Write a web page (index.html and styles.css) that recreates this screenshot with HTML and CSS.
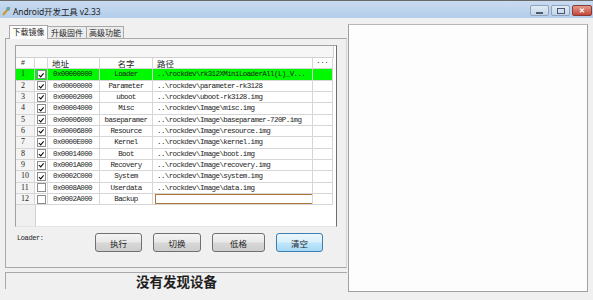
FILE: index.html
```html
<!DOCTYPE html>
<html lang="zh-CN">
<head>
    <meta charset="UTF-8">
    <title>Android开发工具 v2.33</title>
    <link rel="stylesheet" href="styles.css">
</head>
<body>
    <div class="titlebar">
        <svg class="app-icon" width="9" height="10" viewBox="0 0 9 10">
            <path d="M1 9 L6 3" stroke="#c89a2a" stroke-width="2"/>
            <path d="M5 1 L8 1 L8 4 L6 5 L4 3 Z" fill="#6aa3a8"/>
        </svg>
        <span class="title">Android开发工具 v2.33</span>
        <div class="controls">
            <span class="ctl min"><i></i></span>
            <span class="ctl max"><i></i></span>
            <span class="ctl close">✕</span>
        </div>
    </div>

    <div class="main">
        <div class="left">
            <div class="tabs">
                <span class="tab active">下载镜像</span>
                <span class="tab">升级固件</span>
                <span class="tab">高级功能</span>
            </div>
            <div class="panel">
                <div class="list">
                    <div class="list-top"></div>
                    <div class="grid">
                        <div class="hd num">#</div>
                        <div class="hd"></div>
                        <div class="hd left-text">地址</div>
                        <div class="hd center">名字</div>
                        <div class="hd left-text">路径</div>
                        <div class="hd center dots">...</div>

                        <div class="c num sel">1</div><div class="c chk sel"><span class="box on"></span></div><div class="c addr sel">0x00000000</div><div class="c name sel">Loader</div><div class="c path sel">..\rockdev\rk312XMiniLoaderAll(L)_V...</div><div class="c sel"></div>
                        <div class="c num">2</div><div class="c chk"><span class="box on"></span></div><div class="c addr">0x00000000</div><div class="c name">Parameter</div><div class="c path">..\rockdev\parameter-rk3128</div><div class="c"></div>
                        <div class="c num">3</div><div class="c chk"><span class="box on"></span></div><div class="c addr">0x00002000</div><div class="c name">uboot</div><div class="c path">..\rockdev\uboot-rk3128.img</div><div class="c"></div>
                        <div class="c num">4</div><div class="c chk"><span class="box on"></span></div><div class="c addr">0x00004000</div><div class="c name">Misc</div><div class="c path">..\rockdev\Image\misc.img</div><div class="c"></div>
                        <div class="c num">5</div><div class="c chk"><span class="box on"></span></div><div class="c addr">0x00006000</div><div class="c name">baseparamer</div><div class="c path">..\rockdev\Image\baseparamer-720P.img</div><div class="c"></div>
                        <div class="c num">6</div><div class="c chk"><span class="box on"></span></div><div class="c addr">0x00006800</div><div class="c name">Resource</div><div class="c path">..\rockdev\Image\resource.img</div><div class="c"></div>
                        <div class="c num">7</div><div class="c chk"><span class="box on"></span></div><div class="c addr">0x0000E000</div><div class="c name">Kernel</div><div class="c path">..\rockdev\Image\kernel.img</div><div class="c"></div>
                        <div class="c num">8</div><div class="c chk"><span class="box on"></span></div><div class="c addr">0x00014000</div><div class="c name">Boot</div><div class="c path">..\rockdev\Image\boot.img</div><div class="c"></div>
                        <div class="c num">9</div><div class="c chk"><span class="box on"></span></div><div class="c addr">0x0001A000</div><div class="c name">Recovery</div><div class="c path">..\rockdev\Image\recovery.img</div><div class="c"></div>
                        <div class="c num">10</div><div class="c chk"><span class="box on"></span></div><div class="c addr">0x0002C000</div><div class="c name">System</div><div class="c path">..\rockdev\Image\system.img</div><div class="c"></div>
                        <div class="c num">11</div><div class="c chk"><span class="box"></span></div><div class="c addr">0x0008A000</div><div class="c name">Userdata</div><div class="c path">..\rockdev\Image\data.img</div><div class="c"></div>
                        <div class="c num">12</div><div class="c chk"><span class="box"></span></div><div class="c addr">0x0002A000</div><div class="c name">Backup</div><div class="c path"><span class="edit"></span></div><div class="c"></div>
                    </div>
                    <div class="filler"></div>
                </div>
                <div class="actions">
                    <span class="loader">Loader:</span>
                    <button class="btn w47">执行</button>
                    <button class="btn w48">切换</button>
                    <button class="btn w53">低格</button>
                    <button class="btn w47 focus">清空</button>
                </div>
            </div>
            <div class="status">没有发现设备</div>
        </div>
        <div class="output"></div>
    </div>
</body>
</html>
```

FILE: styles.css
```css
body {
    margin: 0;
    width: 593px;
    height: 300px;
    overflow: hidden;
    background: #f0f0f0;
    font-family: "Noto Sans", "Noto Sans CJK SC", sans-serif;
    color: #1e1e1e;
}

/* title bar */
.titlebar {
    height: 17px;
    border-top: 1px solid #6a6a6a;
    background: linear-gradient(#c8dbf0, #b4cde9);
    display: flex;
    align-items: center;
    padding-left: 2px;
}

.app-icon {
    margin-top: 3px;
}

.title {
    font-size: 8.5px;
    margin-left: 2px;
    margin-top: 3px;
    letter-spacing: -0.1px;
}

.controls {
    margin-left: auto;
    display: flex;
    align-self: flex-start;
    margin-top: 4px;
    margin-right: 1px;
    gap: 2px;
}

.ctl {
    width: 19px;
    height: 11px;
    border: 1px solid #8ea3bd;
    border-radius: 2px;
    background: linear-gradient(#e3ecf6, #c3d3e6);
    box-sizing: border-box;
    display: flex;
    align-items: center;
    justify-content: center;
}

.ctl.min i {
    width: 7px;
    height: 2px;
    background: #4a5a70;
    margin-top: 4px;
}

.ctl.max i {
    width: 6px;
    height: 4px;
    border: 1px solid #4a5a70;
}

.ctl.close {
    width: 20px;
    border-color: #8a3a30;
    background: linear-gradient(#e29a8c, #c4493a);
    color: #fff;
    font-size: 7px;
    font-weight: bold;
}

/* main layout */
.main {
    display: flex;
    padding-left: 5px;
}

.left {
    width: 342px;
    padding-top: 7px;
}

.tabs {
    display: flex;
    height: 13px;
    padding-left: 4px;
}

.tab {
    font-family: "Noto Sans CJK SC", sans-serif;
    font-size: 8px;
    line-height: 12px;
    white-space: nowrap;
    border: 1px solid #a8a8a8;
    border-bottom: none;
    background: #ececec;
    margin-top: 1px;
    margin-right: -1px;
    width: 40px;
    text-align: center;
    box-sizing: border-box;
}

.tab:last-child {
    width: 38px;
}

.tab.active {
    background: #fcfcfc;
    margin-top: 0;
    width: 39px;
    position: relative;
    z-index: 1;
    height: 14px;
}

.panel {
    height: 230px;
    box-sizing: border-box;
    border: 1px solid #a8a8a8;
    border-right-color: #d4d4d4;
    padding: 6px 0 0 9px;
}

/* list view */
.list {
    width: 322px;
    height: 182px;
    box-sizing: border-box;
    border: 1px solid #a0a0a0;
    border-right-color: #6e6e6e;
    border-bottom-color: #e4e4e4;
    background: #fff;
    display: flex;
    flex-direction: column;
}

.list-top {
    height: 11px;
    background: #f6f6f6;
    border-bottom: 1px solid #d0d0d0;
    width: 317px;
    border-right: 1px solid #d0d0d0;
}

.grid {
    display: grid;
    grid-template-columns: 19px 13px 52px 53px 160px 20px;
    grid-auto-rows: 11.35px;
}

.grid > div {
    box-sizing: border-box;
    border-right: 1px solid #d6d6d6;
    border-bottom: 1px solid #d6d6d6;
    font-family: "Liberation Mono", monospace;
    font-size: 7.5px;
    letter-spacing: -0.6px;
    line-height: 10.5px;
    white-space: nowrap;
    overflow: hidden;
}

.grid > .hd {
    font-family: "Noto Sans CJK SC", sans-serif;
    font-size: 8.5px;
    letter-spacing: 0;
    background: #fff;
}

.hd.left-text {
    padding-left: 4px;
}

.hd.center {
    text-align: center;
}

.hd.dots {
    font-family: "Liberation Mono", monospace;
    font-size: 7px;
    line-height: 7px;
}

.grid > .num {
    background: #f4f4f4;
    padding-left: 5px;
    font-family: "Liberation Serif", serif;
    font-size: 8px;
    letter-spacing: 0;
}

.grid > .hd.num {
    background: #fff;
    padding-left: 5px;
    font-family: "Liberation Sans", sans-serif;
    font-size: 7px;
}

.addr {
    padding-left: 5px;
}

.name {
    text-align: center;
}

.path {
    padding-left: 4px;
}

.grid > .sel {
    background: #00f800;
}

.chk {
    display: flex;
    align-items: center;
    justify-content: center;
}

.box {
    width: 9px;
    height: 9px;
    box-sizing: border-box;
    border: 1px solid #8c8c8c;
    background: #fff;
    position: relative;
}

.box.on::after {
    content: "";
    position: absolute;
    left: 2.5px;
    top: 0.5px;
    width: 1.5px;
    height: 3.5px;
    border: solid #000;
    border-width: 0 1.5px 1.5px 0;
    transform: rotate(40deg);
}

.edit {
    display: block;
    margin-left: -2px;
    width: 158px;
    height: 10px;
    box-sizing: border-box;
    border: 1px solid #b07838;
    background: #fff;
}

.filler {
    flex: 1;
    width: 19px;
    background: #f0f0f0;
    border-right: 1px solid #d0d0d0;
}

/* buttons */
.actions {
    display: flex;
    align-items: flex-start;
    margin-top: 6px;
    gap: 11px;
}

.loader {
    font-family: "Liberation Mono", monospace;
    font-size: 7px;
    letter-spacing: -0.4px;
    width: 67px;
    padding-left: 2px;
    margin-top: 1px;
}

.btn {
    height: 19px;
    padding: 0;
    border: 1px solid #707070;
    border-radius: 3px;
    background: linear-gradient(#f4f4f4 0%, #e8e8e8 48%, #d8d8d8 52%, #cdcdcd 100%);
    font-family: "Noto Sans CJK SC", sans-serif;
    font-size: 8.5px;
    color: #1e1e1e;
}

.btn.focus {
    border-color: #3c7fb1;
    background: linear-gradient(#eaf6fd 0%, #d9f0fc 48%, #bee6fd 52%, #a7d9f5 100%);
}

.w47 { width: 47px; }
.w48 { width: 48px; }
.w53 { width: 53px; }

/* status line */
.status {
    margin-top: 4px;
    height: 16px;
    border-top: 1px solid #a8a8a8;
    border-left: 1px solid #a8a8a8;
    text-align: center;
    font-family: "Noto Sans CJK SC", sans-serif;
    font-weight: bold;
    font-size: 13.5px;
    line-height: 17px;
}

/* right output box */
.output {
    width: 240px;
    height: 268px;
    margin-top: 6px;
    margin-left: 1px;
    box-sizing: border-box;
    border: 1px solid #a0a0a0;
    border-top-color: #b8b8b8;
    background: #fdfdfd;
}
```
